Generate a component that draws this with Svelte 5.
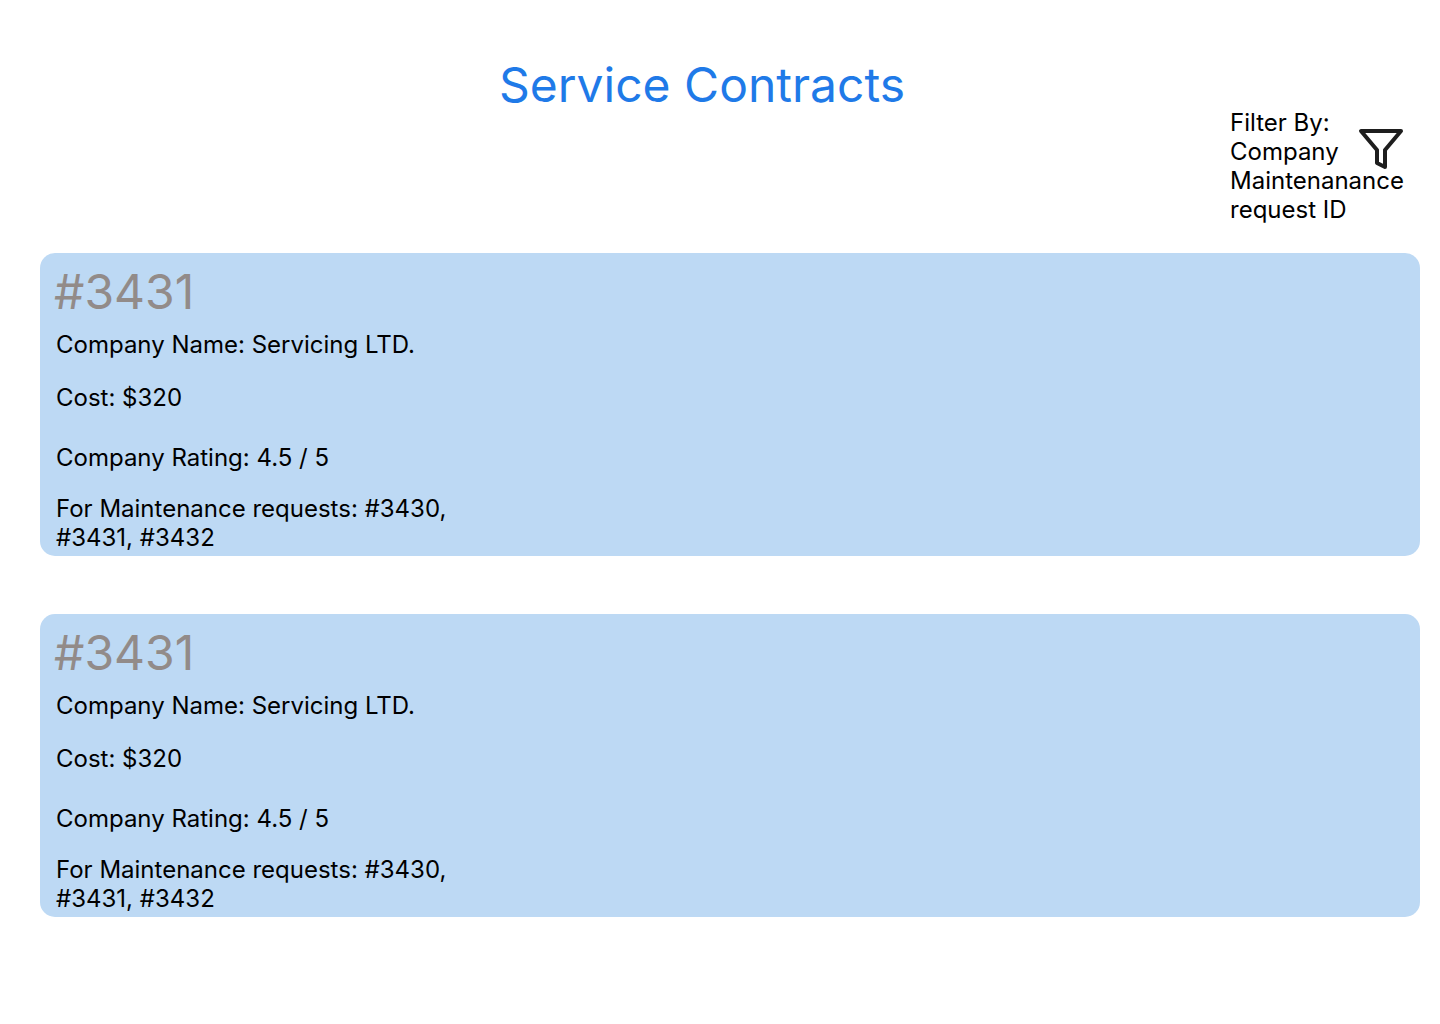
<script>
  const contracts = [
    { id: 1, number: '#3431', company: 'Servicing LTD.', cost: '$320', rating: '4.5 / 5', requests: ['#3430', '#3431', '#3432'] },
    { id: 2, number: '#3431', company: 'Servicing LTD.', cost: '$320', rating: '4.5 / 5', requests: ['#3430', '#3431', '#3432'] }
  ];
</script>

<main>
  <h1>Service Contracts</h1>

  <section class="filter" aria-label="Filters">
    <p>Filter By:<br />Company<br />Maintenanance request ID</p>
    <button type="button" aria-label="Filter contracts">
      <svg viewBox="0 0 48 44" width="48" height="44" aria-hidden="true">
        <path d="M4 4H44L28 23V40L20 36V23Z" fill="none" stroke="#1e1e1e" stroke-width="4" stroke-linejoin="round" />
      </svg>
    </button>
  </section>

  <div class="list">
    {#each contracts as contract (contract.id)}
      <article>
        <h2>{contract.number}</h2>
        <p class="company">Company Name: {contract.company}</p>
        <p class="cost">Cost: {contract.cost}</p>
        <p class="rating">Company Rating: {contract.rating}</p>
        <p class="requests">For Maintenance requests: {contract.requests.join(', ')}</p>
      </article>
    {/each}
  </div>
</main>

<style>
  :global(body) {
    margin: 0;
    background: #fff;
  }

  main {
    padding: 56px 20px 56px 40px;
    font-family: Inter, sans-serif;
    font-size: 24px;
    line-height: 29px;
    color: #000;
  }

  h1,
  h2,
  p {
    margin: 0;
    font-weight: 400;
  }

  h1 {
    padding-right: 56px;
    font-size: 48px;
    line-height: 58px;
    text-align: center;
    color: #1f7ae8;
  }

  .filter {
    display: grid;
    grid-template-columns: 127px 49px;
    justify-content: end;
    margin: -6px 14px 0 0;
  }

  .filter p {
    grid-area: 1 / 1 / 2 / 3;
  }

  button {
    grid-area: 1 / 2;
    place-self: start;
    margin-top: 19px;
    padding: 0;
    border: 0;
    background: none;
    line-height: 0;
    cursor: pointer;
  }

  .list {
    display: grid;
    gap: 58px;
    margin-top: 29px;
  }

  article {
    padding: 10px 16px 4px;
    border-radius: 15px;
    background: #bdd9f4;
  }

  h2 {
    margin-left: -2px;
    font-size: 48px;
    line-height: 58px;
    color: #928b89;
  }

  .company {
    margin-top: 9px;
  }

  .cost {
    margin-top: 24px;
  }

  .rating {
    margin-top: 31px;
  }

  .requests {
    max-width: 400px;
    margin-top: 22px;
  }
</style>
